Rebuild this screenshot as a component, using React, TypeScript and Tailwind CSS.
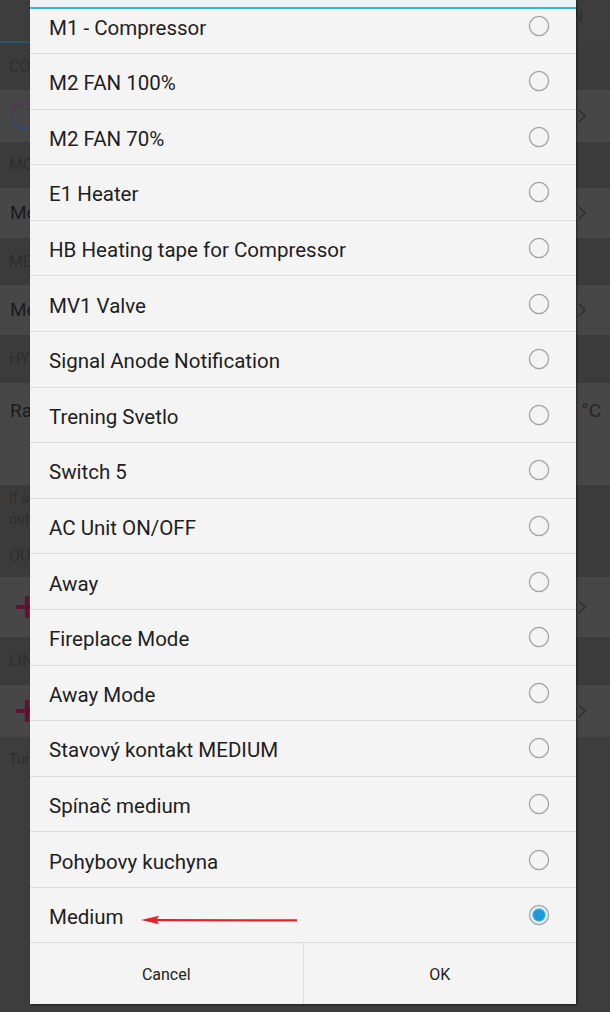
import React from "react";

const items = [
  "M1 - Compressor",
  "M2 FAN 100%",
  "M2 FAN 70%",
  "E1 Heater",
  "HB Heating tape for Compressor",
  "MV1 Valve",
  "Signal Anode Notification",
  "Trening Svetlo",
  "Switch 5",
  "AC Unit ON/OFF",
  "Away",
  "Fireplace Mode",
  "Away Mode",
  "Stavový kontakt MEDIUM",
  "Spínač medium",
  "Pohybovy kuchyna",
  "Medium",
];

const font = { fontFamily: "Roboto, 'Noto Sans', 'Liberation Sans', sans-serif" };

function Chevron() {
  return (
    <svg width="8" height="14" viewBox="0 0 8 14" className="shrink-0">
      <path d="M1 1 L7 7 L1 13" fill="none" stroke="#2c2c2c" strokeWidth="1.3" />
    </svg>
  );
}

function RedPlus() {
  return (
    <svg width="22" height="22" viewBox="0 0 22 22" className="shrink-0">
      <rect x="0" y="9" width="22" height="4" fill="#5e1430" />
      <rect x="9" y="0" width="4" height="22" fill="#5e1430" />
    </svg>
  );
}

function Radio({ checked }: { checked: boolean }) {
  if (checked) {
    return (
      <svg width="22" height="22" viewBox="0 0 22 22" className="shrink-0">
        <circle cx="11" cy="11" r="9.6" fill="#dff0f8" stroke="#a6a6a6" strokeWidth="1.3" />
        <circle cx="11" cy="11" r="6.3" fill="#1b9ad8" stroke="#6cbde6" strokeWidth="0.8" />
      </svg>
    );
  }
  return (
    <svg width="22" height="22" viewBox="0 0 22 22" className="shrink-0">
      <circle cx="11" cy="11" r="9.6" fill="none" stroke="#a3a3a3" strokeWidth="1.3" />
    </svg>
  );
}

export default function App() {
  return (
    <div className="relative w-[610px] h-[1012px] overflow-hidden bg-[#3d3d3d]" style={font}>
      {/* Background settings screen (dimmed) */}
      <div className="flex flex-col w-full">
        <div className="flex h-[43px] bg-[#3d3d3d]">
          <div className="w-[200px] h-full border-b-2 border-[#1d5b73]" />
          <div className="flex-1 flex justify-end pr-[27px] pt-[7px] text-[14px] text-[#2f2f2f]">INFORMATION</div>
        </div>
        <div className="h-[47px] bg-[#3b3b3b] flex items-center pl-[9px] text-[16px] text-[#2e2e2e]">COMPRESSOR</div>
        <div className="h-[52px] bg-[#474747] flex items-center pl-[10px] pr-[24px] justify-between">
          <svg width="28" height="28" viewBox="0 0 28 28">
            <defs>
              <linearGradient id="g" x1="0" y1="0" x2="0" y2="1">
                <stop offset="0" stopColor="#5a2a58" />
                <stop offset="1" stopColor="#34457a" />
              </linearGradient>
            </defs>
            <circle cx="14" cy="14" r="12.5" fill="none" stroke="url(#g)" strokeWidth="1.6" />
          </svg>
          <Chevron />
        </div>
        <div className="h-[46px] bg-[#3b3b3b] flex items-center pl-[9px] text-[16px] text-[#2e2e2e]">MODE</div>
        <div className="h-[50px] bg-[#474747] flex items-center justify-between pl-[10px] pr-[24px] text-[19px] text-[#1b1b1b]">
          <span>Mode</span>
          <Chevron />
        </div>
        <div className="h-[47px] bg-[#3b3b3b] flex items-center pl-[9px] text-[16px] text-[#2e2e2e]">MEDIUM</div>
        <div className="h-[50px] bg-[#474747] flex items-center justify-between pl-[10px] pr-[24px] text-[19px] text-[#1b1b1b]">
          <span>Medium</span>
          <Chevron />
        </div>
        <div className="h-[48px] bg-[#3b3b3b] flex items-center pl-[9px] text-[16px] text-[#2e2e2e]">HYSTERESIS</div>
        <div className="h-[102px] bg-[#474747] flex items-start justify-between pl-[10px] pr-[9px] pt-[14px] text-[19px] text-[#1b1b1b]">
          <span>Range</span>
          <span className="text-[#262626]">°C</span>
        </div>
        <div className="h-[50px] bg-[#3b3b3b] pl-[9px] pt-[3px] text-[14px] leading-[21px] text-[#2e2e2e]">
          <div>If set</div>
          <div>output</div>
        </div>
        <div className="h-[42px] bg-[#3b3b3b] flex items-center pl-[9px] text-[16px] text-[#2e2e2e]">OUTPUTS</div>
        <div className="h-[60px] bg-[#474747] flex items-center justify-between pl-[16px] pr-[24px]">
          <RedPlus />
          <Chevron />
        </div>
        <div className="h-[48px] bg-[#3b3b3b] flex items-center pl-[9px] text-[16px] text-[#2e2e2e]">LINKS</div>
        <div className="h-[52px] bg-[#474747] flex items-center justify-between pl-[16px] pr-[24px]">
          <RedPlus />
          <Chevron />
        </div>
        <div className="pl-[9px] pt-[12px] text-[14px] text-[#2e2e2e]">Turn on</div>
      </div>

      {/* Dialog */}
      <div className="absolute left-[30px] top-0 w-[546px] h-[1004px] bg-[#f4f4f4] flex flex-col shadow-[1px_1px_2px_rgba(0,0,0,0.55)]">
        <div className="h-[7px] bg-[#f0f0f0] shrink-0" />
        <div className="h-[2px] bg-[#33b5e5] shrink-0" />
        <div className="flex-1 overflow-hidden">
          <div className="mt-[-10.6px]">
            {items.map((t, i) => (
              <div
                key={t}
                className="relative h-[55.6px] border-b border-[#dcdcdc] flex items-center justify-between pl-[19px] pr-[26px] text-[#1e1e1e]"
              >
                <span className="pt-[4px] text-[20.5px] leading-[24px]">{t}</span>
                <Radio checked={i === items.length - 1} />
                {i === items.length - 1 && (
                  <svg className="absolute left-[111px] top-[26px]" width="158" height="12" viewBox="0 0 158 12">
                    <path d="M0 6 L18 1.8 L16 5 L156 5.2 L156 7.6 L16 7.2 L18 10.2 Z" fill="#e3222b" />
                  </svg>
                )}
              </div>
            ))}
          </div>
        </div>
        <div className="h-[62px] shrink-0 border-t border-[#dcdcdc] flex text-[16px] text-[#222]">
          <div className="flex-1 flex items-center justify-center pt-[3px] border-r border-[#dcdcdc]">Cancel</div>
          <div className="flex-1 flex items-center justify-center pt-[3px]">OK</div>
        </div>
      </div>
    </div>
  );
}
